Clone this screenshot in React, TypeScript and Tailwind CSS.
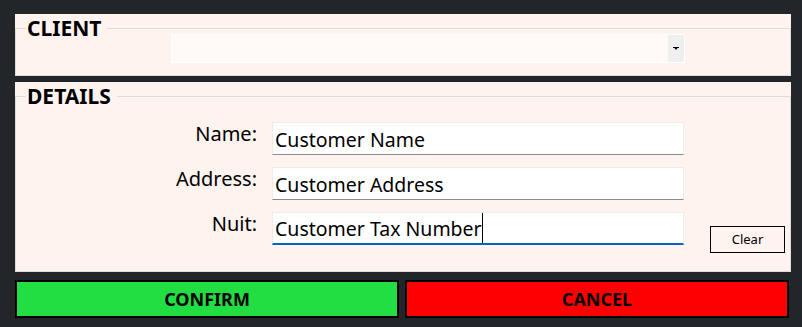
import React from 'react';

const font = { fontFamily: '"Noto Sans", "Open Sans", sans-serif' };

const fields = [
  { label: 'Name:', value: 'Customer Name', focused: false },
  { label: 'Address:', value: 'Customer Address', focused: false },
  { label: 'Nuit:', value: 'Customer Tax Number', focused: true },
];

function Legend({ children }: { children: React.ReactNode }) {
  return (
    <legend className="ml-[10px] pl-[1px] pr-[6px] text-[21px] font-bold leading-[28px] text-black">
      {children}
    </legend>
  );
}

function TextBox({ value, focused }: { value: string; focused: boolean }) {
  return (
    <div
      className={`flex h-[33px] w-[412px] items-center border border-[#ececec] bg-white pl-[2px] ${
        focused ? 'border-b-2 border-b-[#0067c0]' : 'border-b-[#8a8a8a]'
      }`}
    >
      <span className="mt-[1px] text-[19.5px] leading-[27px] text-black">{value}</span>
      {focused && <span className="h-[30px] w-px bg-black" />}
    </div>
  );
}

export default function App() {
  return (
    <div className="flex h-[327px] w-[802px] flex-col bg-[#232629] pl-[15px] pr-[11px] pt-[14px]" style={font}>
      {/* client panel */}
      <div className="h-[62px] bg-[#fef3ef]">
        <fieldset className="h-full border border-[#dcdcdc]">
          <Legend>CLIENT</Legend>
          <div className="-mt-[8px] ml-[155px] flex h-[29px] w-[514px] border border-white bg-[#fff9f7]">
            <div className="flex-1" />
            <div className="flex w-[16px] items-center justify-center bg-[#efefef]">
              <svg width="6" height="4" viewBox="0 0 6 4">
                <polygon points="0,0 6,0 6,1 4.5,1 3,3 1.5,1 0,1" fill="#000" />
              </svg>
            </div>
          </div>
        </fieldset>
      </div>

      {/* details panel */}
      <div className="mt-[6px] h-[190px] bg-[#fef3ef]">
        <fieldset className="h-full border border-[#dcdcdc]">
          <Legend>DETAILS</Legend>
          <div className="mt-[12px] flex items-start">
            <div className="grid grid-cols-[241px_412px] gap-x-[15px] gap-y-[12px]">
              {fields.map((f) => (
                <React.Fragment key={f.label}>
                  <div className="-mt-[2px] text-right text-[20px] leading-[27px] text-black">{f.label}</div>
                  <TextBox value={f.value} focused={f.focused} />
                </React.Fragment>
              ))}
            </div>
            <button className="ml-[26px] mt-[104px] h-[27px] w-[75px] border border-black bg-[#fef3ef] text-[13px] text-black">
              Clear
            </button>
          </div>
        </fieldset>
      </div>

      {/* actions */}
      <div className="mt-[8px] flex h-[38px] gap-[6px] pr-[2px]">
        <button className="flex-1 border-2 border-black bg-[#22de43] text-[18px] font-bold text-black">CONFIRM</button>
        <button className="flex-1 border-2 border-black bg-[#ff0000] text-[18px] font-bold text-black">CANCEL</button>
      </div>
    </div>
  );
}
